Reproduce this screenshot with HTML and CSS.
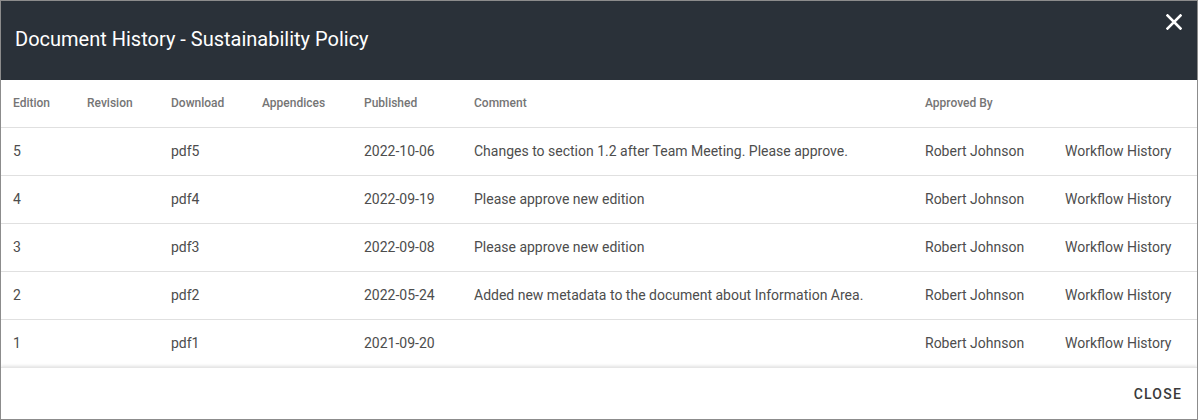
FILE: index.html
```html
<!DOCTYPE html>
<html>
<head>
<meta charset="utf-8">
<link rel="stylesheet" href="styles.css">
</head>
<body>
<div class="dialog">
  <div class="titlebar">
    <div class="title">Document History - Sustainability Policy</div>
    <button class="xbtn" aria-label="Close">
      <svg width="16" height="16" viewBox="0 0 16 16"><path d="M1.5 1.5 L14.5 14.5 M14.5 1.5 L1.5 14.5" stroke="#fff" stroke-width="2.6" stroke-linecap="square" fill="none"/></svg>
    </button>
  </div>
  <div class="table">
    <div class="row head">
      <div>Edition</div><div>Revision</div><div>Download</div><div>Appendices</div><div>Published</div><div>Comment</div><div>Approved By</div><div></div>
    </div>
    <div class="row">
      <div>5</div><div></div><div>pdf5</div><div></div><div>2022-10-06</div><div>Changes to section 1.2 after Team Meeting. Please approve.</div><div>Robert Johnson</div><div>Workflow History</div>
    </div>
    <div class="row">
      <div>4</div><div></div><div>pdf4</div><div></div><div>2022-09-19</div><div>Please approve new edition</div><div>Robert Johnson</div><div>Workflow History</div>
    </div>
    <div class="row">
      <div>3</div><div></div><div>pdf3</div><div></div><div>2022-09-08</div><div>Please approve new edition</div><div>Robert Johnson</div><div>Workflow History</div>
    </div>
    <div class="row">
      <div>2</div><div></div><div>pdf2</div><div></div><div>2022-05-24</div><div>Added new metadata to the document about Information Area.</div><div>Robert Johnson</div><div>Workflow History</div>
    </div>
    <div class="row last">
      <div>1</div><div></div><div>pdf1</div><div></div><div>2021-09-20</div><div></div><div>Robert Johnson</div><div>Workflow History</div>
    </div>
  </div>
  <div class="footer">
    <button class="closebtn">CLOSE</button>
  </div>
</div>
</body>
</html>
```

FILE: styles.css
```css
html, body {
  margin: 0;
  padding: 0;
  background: #fff;
}
.dialog {
  width: 1198px;
  height: 420px;
  box-sizing: border-box;
  border: 1px solid #8c8c8c;
  display: flex;
  flex-direction: column;
  font-family: Roboto, "Liberation Sans", sans-serif;
  overflow: hidden;
}
.titlebar {
  height: 79px;
  background: #2a3139;
  display: flex;
  align-items: center;
  justify-content: space-between;
  padding: 0 15px 0 14px;
  flex: none;
}
.title {
  color: #fff;
  font-size: 20px;
  margin-top: -4px;
}
.xbtn {
  background: none;
  border: 0;
  padding: 0;
  margin-top: -37px;
  width: 16px;
  height: 16px;
  display: flex;
}
.table {
  flex: none;
}
.row {
  display: grid;
  grid-template-columns: 74px 84px 91px 102px 110px 451px 140px 1fr;
  height: 48px;
  align-items: center;
  padding-left: 12px;
  padding-bottom: 2px;
  border-bottom: 1px solid #e0e0e0;
  font-size: 14px;
  color: #4d4d4d;
  box-sizing: border-box;
}
.row > div {
  white-space: nowrap;
}
.row.head {
  font-size: 12px;
  font-weight: 500;
  color: #757575;
  padding-bottom: 1px;
}
.row.last {
  border-bottom: 0;
  height: 47px;
  padding-bottom: 1px;
}
.footer {
  flex: 1;
  display: flex;
  justify-content: flex-end;
  align-items: center;
  padding-right: 15px;
  box-shadow: 0 -1px 3px rgba(0,0,0,0.12);
  border-top: 1px solid #e6e6e6;
  position: relative;
}
.closebtn {
  background: none;
  border: 0;
  padding: 0;
  font-family: Roboto, "Liberation Sans", sans-serif;
  font-size: 14px;
  font-weight: 500;
  letter-spacing: 1.2px;
  color: #3a3a3a;
}
```
